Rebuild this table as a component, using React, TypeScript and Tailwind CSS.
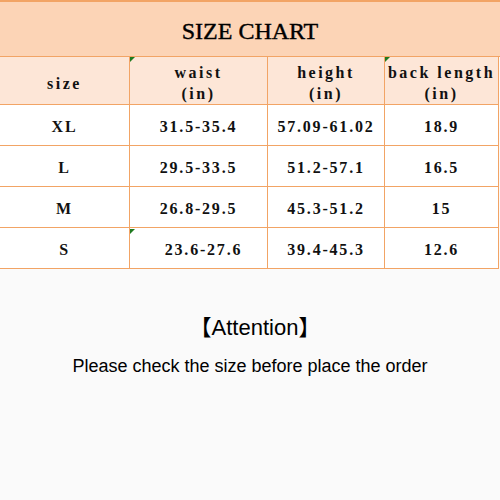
import React from "react";

const rows = [
  { size: "XL", waist: "31.5-35.4", height: "57.09-61.02", back: "18.9", shift: false },
  { size: "L", waist: "29.5-33.5", height: "51.2-57.1", back: "16.5", shift: false },
  { size: "M", waist: "26.8-29.5", height: "45.3-51.2", back: "15", shift: false },
  { size: "S", waist: "23.6-27.6", height: "39.4-45.3", back: "12.6", shift: true },
];

const Mark = ({ className }: { className: string }) => (
  <div className={`absolute w-0 h-0 border-t-[5px] border-t-[#1f7a1f] border-r-[5px] border-r-transparent ${className}`} />
);

export default function App() {
  const serif = { fontFamily: '"Liberation Serif", "DejaVu Serif", serif' };
  const head = "h-[48px] bg-[#fde6d7] border-r border-b border-[#f2a465] flex flex-col items-center justify-center pt-[5px] text-[16px] leading-[21px] tracking-[2.5px] whitespace-nowrap";
  const cell = "h-[41px] bg-white border-r border-b border-[#f2a465] flex items-center justify-center pt-[3px] text-[16px] tracking-[1.8px]";
  return (
    <div className="w-[500px] h-[500px] bg-[#fafafa] overflow-hidden relative">
      <div style={serif} className="text-[#111]">
        <div className="h-[57px] bg-[#fcd4b6] border-t-2 border-t-[#f2a465] border-b border-b-[#f2a465] flex items-center justify-center pt-[4px] text-[24px] text-black [-webkit-text-stroke:0.4px_#000]">
          SIZE CHART
        </div>
        <div className="grid grid-cols-[130px_138px_117px_114px] w-[499px] font-bold">
          <div className={head}><span>size</span></div>
          <div className={head}>
            <span>waist</span><span>(in)</span>
          </div>
          <div className={head}>
            <span>height</span><span>(in)</span>
          </div>
          <div className={`${head} tracking-[2.2px]`}>
            <span>back length</span><span>(in)</span>
          </div>
          {rows.map((r) => (
            <React.Fragment key={r.size}>
              <div className={cell}>{r.size}</div>
              <div className={`${cell} ${r.shift ? "pl-[10px]" : ""}`}>{r.waist}</div>
              <div className={cell}>{r.height}</div>
              <div className={cell}>{r.back}</div>
            </React.Fragment>
          ))}
        </div>
      </div>
      <Mark className="left-[130px] top-[57px]" />
      <Mark className="left-[385px] top-[57px]" />
      <Mark className="left-[130px] top-[229px]" />
      <div
        className="flex flex-col items-center text-black mt-[46px]"
        style={{ fontFamily: '"Liberation Sans", Arial, "Noto Sans CJK SC", sans-serif' }}
      >
        <div className="text-[22px] leading-[26px] pl-[10px]">【Attention】</div>
        <div className="text-[18px] leading-[20px] mt-[15px]">Please check the size before place the order</div>
      </div>
    </div>
  );
}
